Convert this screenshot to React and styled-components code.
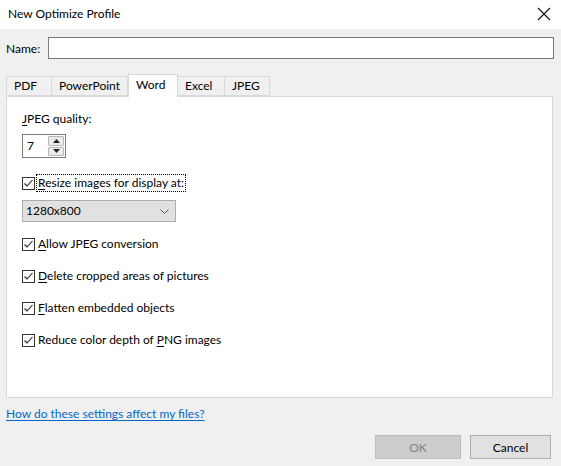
import React from "react";
import styled, { createGlobalStyle } from "styled-components";

const GlobalStyle = createGlobalStyle`
  html, body {
    margin: 0;
    padding: 0;
    background: #f0f0f0;
  }
  * {
    box-sizing: border-box;
  }
  body {
    font-family: "Segoe UI", Lato, "Noto Sans", sans-serif;
    font-size: 12px;
    color: #000;
  }
`;

const Window = styled.div`
  width: 561px;
  height: 466px;
  display: flex;
  flex-direction: column;
  background: #f0f0f0;
  overflow: hidden;
`;

const TitleBar = styled.div`
  height: 29px;
  background: #fff;
  display: flex;
  align-items: center;
  justify-content: space-between;
  padding: 0 8px 2px 8px;
  line-height: 16px;
`;

const CloseButton = styled.div`
  width: 14px;
  height: 14px;
  display: flex;
  margin-right: 2px;
`;

const Body = styled.div`
  flex: 1;
  display: flex;
  flex-direction: column;
  padding: 8px 7px 7px 6px;
`;

const NameRow = styled.div`
  display: flex;
  align-items: center;
  height: 22px;
`;

const NameLabel = styled.span`
  width: 42px;
`;

const NameInput = styled.div`
  flex: 1;
  height: 22px;
  background: #fff;
  border: 1px solid #7a7a7a;
`;

const TabStrip = styled.div`
  display: flex;
  align-items: flex-end;
  height: 23px;
  margin-top: 14px;
  margin-right: 1px;
`;

const Tab = styled.div`
  position: relative;
  z-index: ${(p) => (p.$active ? 1 : 0)};
  width: ${(p) => p.$w}px;
  height: ${(p) => (p.$active ? 23 : 20)}px;
  margin-bottom: ${(p) => (p.$active ? -1 : 0)}px;
  margin-left: ${(p) => (p.$active ? 0 : -1)}px;
  background: ${(p) => (p.$active ? "#fff" : "#f0f0f0")};
  border: 1px solid #d9d9d9;
  border-bottom: ${(p) => (p.$active ? "none" : "1px solid #d9d9d9")};
  padding: ${(p) => (p.$active ? "2px 0 0 7px" : "1px 0 0 7px")};
  line-height: 16px;

  &:first-child {
    margin-left: 0;
  }
`;

const Panel = styled.div`
  height: 302px;
  margin-right: 1px;
  background: #fff;
  border: 1px solid #d9d9d9;
  padding: 14px 15px 0 15px;
  display: flex;
  flex-direction: column;
  align-items: flex-start;
  line-height: 16px;
`;

const Key = styled.span`
  text-decoration: underline;
  text-underline-offset: 2px;
`;

const Spinner = styled.div`
  margin-top: 7px;
  width: 44px;
  height: 24px;
  border: 1px solid #7a7a7a;
  display: flex;
  justify-content: space-between;
  padding: 1px 1px 1px 4px;
  line-height: 20px;
`;

const SpinButtons = styled.div`
  width: 16px;
  display: flex;
  flex-direction: column;
  gap: 1px;
`;

const SpinButton = styled.div`
  flex: 1;
  background: #ececec;
  border: 1px solid #b8b8b8;
  border-radius: 1px;
  display: flex;
  align-items: center;
  justify-content: center;
`;

const CheckRow = styled.div`
  display: flex;
  align-items: center;
  margin-top: ${(p) => p.$top}px;
  height: 16px;
`;

const Box = styled.div`
  width: 13px;
  height: 13px;
  border: 1px solid #333;
  background: #fff;
  display: flex;
  align-items: center;
  justify-content: center;
  margin-right: 2px;
`;

const CheckLabel = styled.span`
  padding: 0 1px;
  outline: ${(p) => (p.$focus ? "1px dotted #000" : "none")};
`;

const Select = styled.div`
  margin-top: 9px;
  width: 154px;
  height: 22px;
  background: #e1e1e1;
  border: 1px solid #adadad;
  display: flex;
  align-items: center;
  justify-content: space-between;
  padding: 0 6px 0 3px;
`;

const HelpLink = styled.a`
  margin-top: 8px;
  line-height: 16px;
  color: #0066cc;
  text-decoration: underline;
  text-underline-offset: 2px;
  align-self: flex-start;
  cursor: pointer;
`;

const ButtonRow = styled.div`
  margin-top: auto;
  display: flex;
  justify-content: flex-end;
  gap: 9px;
  padding-right: 3px;
`;

const Button = styled.div`
  width: ${(p) => p.$w}px;
  height: 24px;
  display: flex;
  align-items: center;
  justify-content: center;
  background: ${(p) => (p.$disabled ? "#cccccc" : "#e1e1e1")};
  border: 1px solid ${(p) => (p.$disabled ? "#bfbfbf" : "#adadad")};
  color: ${(p) => (p.$disabled ? "#838383" : "#000")};
`;

const Check = () => (
  <svg width="11" height="11" viewBox="0 0 11 11">
    <polyline points="1.5,5.5 4,8 9.5,2" fill="none" stroke="#222" strokeWidth="1.1" />
  </svg>
);

const Arrow = ({ up }) => (
  <svg width="7" height="4" viewBox="0 0 7 4">
    <polygon points={up ? "0,4 7,4 3.5,0" : "0,0 7,0 3.5,4"} fill="#222" />
  </svg>
);

const tabs = [
  { label: "PDF", w: 46 },
  { label: "PowerPoint", w: 77 },
  { label: "Word", w: 50 },
  { label: "Excel", w: 48 },
  { label: "JPEG", w: 46 },
];

function Option({ top, focus, children }) {
  return (
    <CheckRow $top={top}>
      <Box>
        <Check />
      </Box>
      <CheckLabel $focus={focus}>{children}</CheckLabel>
    </CheckRow>
  );
}

export default function App() {
  return (
    <Window>
      <GlobalStyle />
      <TitleBar>
        <span>New Optimize Profile</span>
        <CloseButton>
          <svg width="14" height="14" viewBox="0 0 14 14">
            <path d="M1 1 L13 13 M13 1 L1 13" stroke="#111" strokeWidth="1.1" />
          </svg>
        </CloseButton>
      </TitleBar>
      <Body>
        <NameRow>
          <NameLabel>Name:</NameLabel>
          <NameInput />
        </NameRow>
        <TabStrip>
          {tabs.map((t) => (
            <Tab key={t.label} $w={t.w} $active={t.label === "Word"}>
              {t.label}
            </Tab>
          ))}
        </TabStrip>
        <Panel>
          <span>
            <Key>J</Key>PEG quality:
          </span>
          <Spinner>
            <span>7</span>
            <SpinButtons>
              <SpinButton>
                <Arrow up />
              </SpinButton>
              <SpinButton>
                <Arrow />
              </SpinButton>
            </SpinButtons>
          </Spinner>
          <Option top={17} focus>
            <Key>R</Key>esize images for display at:
          </Option>
          <Select>
            <span>1280x800</span>
            <svg width="9" height="5" viewBox="0 0 9 5">
              <polyline points="0.5,0.5 4.5,4.5 8.5,0.5" fill="none" stroke="#555" strokeWidth="1" />
            </svg>
          </Select>
          <Option top={14}>
            <Key>A</Key>llow JPEG conversion
          </Option>
          <Option top={16}>
            <Key>D</Key>elete cropped areas of pictures
          </Option>
          <Option top={16}>
            <Key>F</Key>latten embedded objects
          </Option>
          <Option top={16}>
            Reduce color depth of <Key>P</Key>NG images
          </Option>
        </Panel>
        <HelpLink>How do these settings affect my files?</HelpLink>
        <ButtonRow>
          <Button $w={86} $disabled>
            OK
          </Button>
          <Button $w={81}>Cancel</Button>
        </ButtonRow>
      </Body>
    </Window>
  );
}
